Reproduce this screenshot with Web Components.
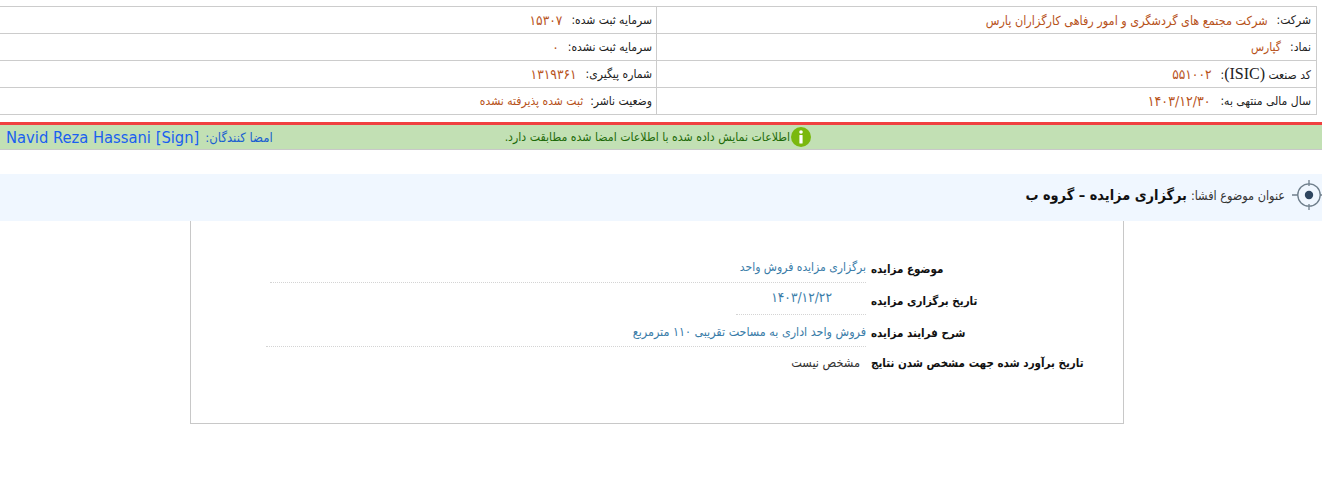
<!DOCTYPE html>
<html lang="fa">
<head>
<meta charset="utf-8">
<title>برگزاری مزایده</title>
<style>
    html, body { margin: 0; padding: 0; background: #fff; overflow: hidden; }
    body { font-family: "DejaVu Sans Condensed", "DejaVu Sans", sans-serif; font-size: 12px; }
</style>
</head>
<body>
<template id="company-info-tpl">
    <style>
        :host { display: block; padding: 6px 5px 0 0; }
        .grid {
            direction: rtl;
            display: grid;
            grid-template-columns: 660px 657px;
            border-top: 1px solid #ccc;
            border-right: 1px solid #ccc;
        }
    </style>
    <div class="grid"><slot></slot></div>
</template>
<template id="info-cell-tpl">
    <style>
        :host {
            display: flex;
            align-items: center;
            gap: var(--cell-gap, 9px);
            height: 26px;
            padding-right: 5px;
            border-bottom: 1px solid #ccc;
            border-left: 1px solid #ccc;
            font-size: 12px;
            color: #222;
            white-space: nowrap;
        }
        :host([last]) { border-left: 0; padding-right: 4px; }
        :host([num]) .value { font-size: var(--value-size, 13.6px); }
        :host([wide]) .value { font-size: 12.5px; }
        .value { color: #b7521a; }
    </style>
    <span><slot name="label"></slot></span>
    <span class="value"><slot></slot></span>
</template>
<template id="sign-bar-tpl">
    <style>
        :host {
            display: flex;
            direction: rtl;
            align-items: center;
            height: 24px;
            margin-top: 7px;
            border-top: 3px solid #f04040;
            border-bottom: 1px solid #c8c8c8;
            background: #c2e0b4;
            white-space: nowrap;
        }
        .status {
            flex: 1;
            display: flex;
            align-items: center;
            gap: 1px;
            padding-right: 511px;
            font-size: 12.2px;
            color: #1e6b0a;
        }
        .signers {
            display: flex;
            align-items: center;
            gap: 6px;
            padding-left: 6px;
            color: #1a5fd0;
            font-size: 13px;
        }
        .name {
            direction: ltr;
            font-size: 16.4px;
            color: #1a5ff0;
        }
        svg { display: block; flex: none; }
    </style>
    <div class="status">
        <svg width="20" height="20" viewBox="0 0 20 20">
            <circle cx="10" cy="10" r="10" fill="#7ab80e"/>
            <circle cx="10" cy="5" r="1.8" fill="#fff"/>
            <rect x="8.4" y="8" width="3.2" height="8.5" rx="0.6" fill="#fff"/>
        </svg>
        <span><slot name="status"></slot></span>
    </div>
    <div class="signers">
        <span><slot name="label"></slot></span>
        <span class="name"><slot name="name"></slot></span>
    </div>
</template>
<template id="subject-bar-tpl">
    <style>
        :host {
            display: flex;
            direction: rtl;
            align-items: center;
            height: 47px;
            box-sizing: border-box;
            padding-bottom: 5px;
            margin-top: 24px;
            background: #f0f7ff;
            white-space: nowrap;
        }
        svg { display: block; flex: none; margin-left: 7px; }
        .label { font-size: 12.5px; color: #333; margin-left: 4px; }
        .title { font-size: 14.4px; font-weight: bold; color: #111; }
    </style>
    <svg width="30" height="32" viewBox="0 0 30 32">
        <g stroke="#6f7f8c" stroke-width="1.3" fill="none">
            <circle cx="17" cy="16" r="11.2"/>
            <path d="M17 1v6M17 25v6M0 16h6M28 16h2"/>
        </g>
        <circle cx="17" cy="16" r="4.2" fill="#2f4660"/>
    </svg>
    <span class="label"><slot name="label"></slot></span>
    <span class="title"><slot></slot></span>
</template>
<template id="detail-box-tpl">
    <style>
        :host {
            display: block;
            direction: rtl;
            box-sizing: border-box;
            width: 934px;
            height: 203px;
            margin-left: 190px;
            padding: 31px 39px 0 0;
            border: 1px solid #c8c8c8;
            border-top: 0;
        }
    </style>
    <slot></slot>
</template>
<template id="detail-row-tpl">
    <style>
        :host {
            display: flex;
            align-items: flex-start;
            gap: 5px;
            height: 32px;
            white-space: nowrap;
        }
        .label {
            width: 213px;
            text-align: left;
            font-size: 11.5px;
            font-weight: bold;
            color: #111;
            padding-top: 10px;
        }
        .value {
            box-sizing: border-box;
            width: var(--value-w, auto);
            height: 31px;
            padding-top: 8px;
            font-size: var(--value-size, 12px);
            color: #3a7ca8;
            border-bottom: 1px dotted #d4d4d4;
        }
        :host([plain]) .label { padding-top: 8px; }
        :host([plain]) .value { color: #333; border-bottom: 0; padding: 7px 6px 0 0; font-size: 12.6px; }
        :host([date]) .value { padding-right: 34px; padding-top: 5px; font-size: 13.6px; }
    </style>
    <span class="label"><slot name="label"></slot></span>
    <span class="value"><slot></slot></span>
</template>

<company-info>
    <info-cell wide><span slot="label">شرکت:</span>شرکت مجتمع های گردشگری و امور رفاهی کارگزاران پارس</info-cell>
    <info-cell last num><span slot="label">سرمایه ثبت شده:</span>۱۵۳۰۷</info-cell>
    <info-cell><span slot="label">نماد:</span>گپارس</info-cell>
    <info-cell last num><span slot="label">سرمایه ثبت نشده:</span>۰</info-cell>
    <info-cell num><span slot="label">کد صنعت <span style="font-family:'Liberation Serif',serif;font-size:16px">(ISIC)</span>:</span>۵۵۱۰۰۲</info-cell>
    <info-cell last num><span slot="label">شماره پیگیری:</span>۱۳۱۹۳۶۱</info-cell>
    <info-cell num style="--value-size:14px;--cell-gap:10px"><span slot="label">سال مالی منتهی به:</span>۱۴۰۳/۱۲/۳۰</info-cell>
    <info-cell last style="--cell-gap:7px"><span slot="label">وضعیت ناشر:</span>ثبت شده پذیرفته نشده</info-cell>
</company-info>
<sign-bar>
    <span slot="status">اطلاعات نمایش داده شده با اطلاعات امضا شده مطابقت دارد.</span>
    <span slot="label">امضا کنندگان:</span>
    <span slot="name">Navid Reza Hassani [Sign]</span>
</sign-bar>
<subject-bar>
    <span slot="label">عنوان موضوع افشا:</span>
    برگزاری مزایده – گروه ب
</subject-bar>
<detail-box>
    <detail-row style="--value-w:596px"><span slot="label">موضوع مزایده</span>برگزاری مزایده فروش واحد</detail-row>
    <detail-row date style="--value-w:130px"><span slot="label">تاریخ برگزاری مزایده</span>۱۴۰۳/۱۲/۲۲</detail-row>
    <detail-row style="--value-w:600px;--value-size:12.4px"><span slot="label">شرح فرایند مزایده</span>فروش واحد اداری به مساحت تقریبی ۱۱۰ مترمربع</detail-row>
    <detail-row plain><span slot="label">تاریخ برآورد شده جهت مشخص شدن نتایج</span>مشخص نیست</detail-row>
</detail-box>

<script>
    // every element just clones its template into an open shadow root
    function defineFromTemplate(tag, tplId) {
        customElements.define(tag, class extends HTMLElement {
            constructor() {
                super();
                this.attachShadow({ mode: "open" });
                this.shadowRoot.appendChild(document.getElementById(tplId).content.cloneNode(true));
            }
        });
    }

    defineFromTemplate("company-info", "company-info-tpl");
    defineFromTemplate("info-cell", "info-cell-tpl");
    defineFromTemplate("sign-bar", "sign-bar-tpl");
    defineFromTemplate("subject-bar", "subject-bar-tpl");
    defineFromTemplate("detail-box", "detail-box-tpl");
    defineFromTemplate("detail-row", "detail-row-tpl");
</script>
</body>
</html>
